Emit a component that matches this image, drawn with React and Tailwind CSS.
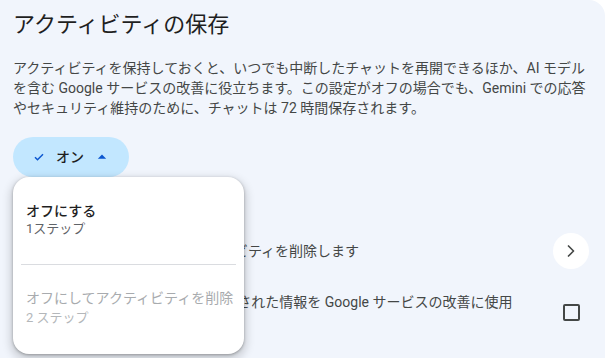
import React from "react";
import { ChevronRight } from "lucide-react";

const font = { fontFamily: 'Roboto, "Noto Sans CJK JP", sans-serif' };

export default function App() {
  return (
    <div className="w-[611px] h-[358px] bg-white overflow-hidden" style={font}>
      <div className="w-[605px] h-[358px] bg-[#f1f5fc] rounded-tr-[16px] pl-[13px] pr-[16px] pt-[11px]">
        <h1 className="text-[22px] leading-[28px] text-[#1f1f1f] font-normal">アクティビティの保存</h1>
        <p className="mt-[19px] text-[14px] leading-[20px] text-[#444746] pr-[2px]">
          アクティビティを保持しておくと、いつでも中断したチャットを再開できるほか、AI モデルを含む Google サービスの改善に役立ちます。この設定がオフの場合でも、Gemini での応答やセキュリティ維持のために、チャットは 72 時間保存されます。
        </p>

        <div className="relative mt-[19px] w-fit">
          <button className="flex items-center h-[40px] w-[116px] rounded-full bg-[#c2e7ff] pl-[20px]">
            <svg width="12" height="12" viewBox="0 0 24 24" className="mr-[11px] shrink-0">
              <path d="M4 12.5l5 5L20 6.5" fill="none" stroke="#0b57d0" strokeWidth="3" />
            </svg>
            <span className="text-[14px] leading-[20px] font-medium text-[#1f1f1f]">オン</span>
            <svg width="20" height="20" viewBox="0 0 24 24" className="ml-[8px] shrink-0">
              <path d="M7 14l5-5 5 5z" fill="#0b57d0" />
            </svg>
          </button>

          <div className="absolute left-0 top-[40px] z-10 w-[231px] h-[177px] bg-white rounded-[16px] shadow-[0_1px_3px_0_rgba(0,0,0,0.3),0_4px_8px_3px_rgba(0,0,0,0.15)]">
            <div className="pl-[13px] pt-[24px] pb-[27px]">
              <div className="text-[14px] leading-[20px] font-medium text-[#1f1f1f]">オフにする</div>
              <div className="text-[13px] leading-[16px] text-[#5f6368]">1ステップ</div>
            </div>
            <div className="mx-[8px] h-px bg-[#dadce0]" />
            <div className="pl-[13px] pt-[23px]">
              <div className="text-[14px] leading-[20px] text-[#a8abae]">オフにしてアクティビティを削除</div>
              <div className="text-[13px] leading-[20px] text-[#b4b7ba]">2 ステップ</div>
            </div>
          </div>
        </div>

        <div className="mt-[56px] flex items-center justify-between h-[36px]">
          <span className="text-[14px] leading-[20px] text-[#444746]">過去に保存されたすべてのアクティビティを削除します</span>
          <button className="w-[36px] h-[36px] rounded-full bg-white flex items-center justify-center text-[#444746]">
            <ChevronRight size={20} strokeWidth={2} />
          </button>
        </div>

        <div className="mt-[23px] flex items-center justify-between">
          <span className="pl-[1px] text-[14px] leading-[20px] text-[#444746]">
            オンにすると、音声やマイクで入力された情報を Google サービスの改善に使用<br />します
          </span>
          <div className="w-[36px] flex justify-center">
            <div className="w-[17px] h-[17px] border-2 border-[#444746] rounded-[2px]" />
          </div>
        </div>
      </div>
    </div>
  );
}
